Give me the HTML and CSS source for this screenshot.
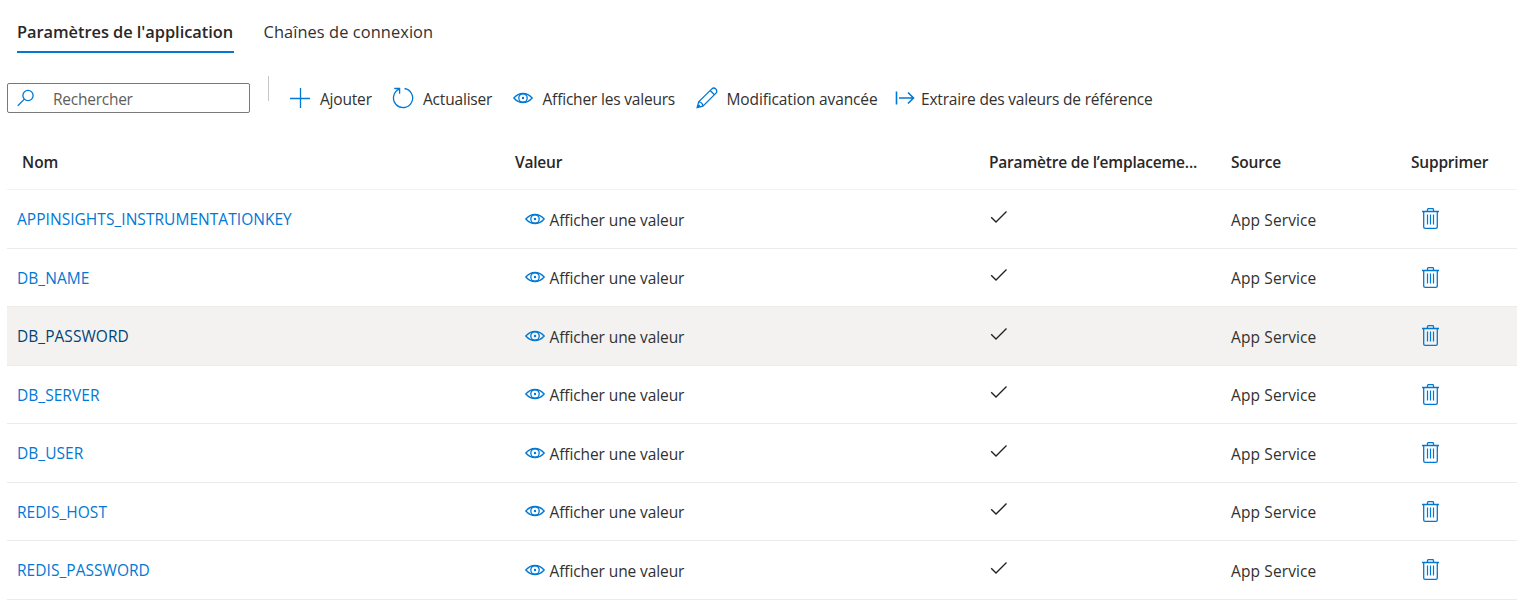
FILE: index.html
```html
<!DOCTYPE html>
<html lang="fr">
<head>
<meta charset="utf-8">
<title>Paramètres de l'application</title>
<link rel="stylesheet" href="styles.css">
</head>
<body>
<svg class="defs" width="0" height="0" aria-hidden="true">
  <symbol id="eye" viewBox="0 0 20 12"><path d="M.8 6C3.400 3 6.400 1.500 10 1.500S16.600 3 19.200 6C16.600 9 13.600 10.500 10 10.500S3.400 9 .8 6z"/><circle cx="10" cy="6" r="4.200"/><circle class="dot" cx="10" cy="6" r="1.200"/></symbol>
  <symbol id="check" viewBox="0 0 18 14"><path d="M1.200 7.300l4.800 4.800L16.500 1.600"/></symbol>
  <symbol id="trash" viewBox="0 0 17 21"><path d="M0 3.500h17M5.500 3.500V1.500q0-.8.8-.8h4.400q.8 0 .8.800v2M1.700 4v14.900q0 1.400 1.400 1.400h10.800q1.400 0 1.400-1.400V4"/><path class="thin" d="M5.500 6.500v10M8.500 6.500v10M11.500 6.500v10"/></symbol>
</svg>
<nav class="tabs">
  <a class="tab active">Paramètres de l'application</a>
  <a class="tab">Chaînes de connexion</a>
</nav>
<div class="toolbar">
  <div class="search">
    <svg class="icon" width="18" height="18" viewBox="0 0 18 18"><circle cx="11" cy="6.500" r="5.100"/><path d="M7.400 10.100L.8 16.700"/></svg>
    <span>Rechercher</span>
  </div>
  <i class="divider"></i>
  <div class="command c-add"><svg class="icon" width="20" height="20" viewBox="0 0 20 20"><path d="M10.500 0v20M0 10.500h20"/></svg><span>Ajouter</span></div>
  <div class="command c-refresh"><svg class="icon" width="22" height="22" viewBox="0 0 22 22"><path d="M12.500 1.500A9.600 9.600 0 1 1 7.200 2.200M2.300 1.500H7.600V6.800"/></svg><span>Actualiser</span></div>
  <div class="command c-show"><svg class="icon" width="20" height="12"><use href="#eye"/></svg><span>Afficher les valeurs</span></div>
  <div class="command c-edit"><svg class="icon" width="22" height="22" viewBox="0 0 22 22"><path d="M1.200 20.500l1.500-5.600L15.800 1.900c2.700-2.500 6.500 1.400 4.200 4.200L6.900 19.100zM2.700 14.900c2.200.2 3.900 1.900 4.200 4.200M14.200 3.500l4.200 4.200M1.200 20.500l2.500-2.500"/></svg><span>Modification avancée</span></div>
  <div class="command c-pull"><svg class="icon bold" width="20" height="14" viewBox="0 0 20 14"><path d="M1.500 .5v13M4 7h14.500M13 1.500L18.500 7L13 12.500"/></svg><span>Extraire des valeurs de référence</span></div>
</div>
<div class="grid">
  <div class="row head"><b class="h-name">Nom</b><b>Valeur</b><b class="h-slot">Paramètre de l’emplaceme...</b><b>Source</b><b>Supprimer</b></div>
  <div class="row"><a>APPINSIGHTS_INSTRUMENTATIONKEY</a><div class="value"><svg class="icon" width="20" height="12"><use href="#eye"/></svg><span>Afficher une valeur</span></div><svg class="icon check" width="18" height="14"><use href="#check"/></svg><span class="source">App Service</span><svg class="icon trash" width="17" height="21"><use href="#trash"/></svg></div>
  <div class="row"><a>DB_NAME</a><div class="value"><svg class="icon" width="20" height="12"><use href="#eye"/></svg><span>Afficher une valeur</span></div><svg class="icon check" width="18" height="14"><use href="#check"/></svg><span class="source">App Service</span><svg class="icon trash" width="17" height="21"><use href="#trash"/></svg></div>
  <div class="row hovered"><a>DB_PASSWORD</a><div class="value"><svg class="icon" width="20" height="12"><use href="#eye"/></svg><span>Afficher une valeur</span></div><svg class="icon check" width="18" height="14"><use href="#check"/></svg><span class="source">App Service</span><svg class="icon trash" width="17" height="21"><use href="#trash"/></svg></div>
  <div class="row"><a>DB_SERVER</a><div class="value"><svg class="icon" width="20" height="12"><use href="#eye"/></svg><span>Afficher une valeur</span></div><svg class="icon check" width="18" height="14"><use href="#check"/></svg><span class="source">App Service</span><svg class="icon trash" width="17" height="21"><use href="#trash"/></svg></div>
  <div class="row"><a>DB_USER</a><div class="value"><svg class="icon" width="20" height="12"><use href="#eye"/></svg><span>Afficher une valeur</span></div><svg class="icon check" width="18" height="14"><use href="#check"/></svg><span class="source">App Service</span><svg class="icon trash" width="17" height="21"><use href="#trash"/></svg></div>
  <div class="row"><a>REDIS_HOST</a><div class="value"><svg class="icon" width="20" height="12"><use href="#eye"/></svg><span>Afficher une valeur</span></div><svg class="icon check" width="18" height="14"><use href="#check"/></svg><span class="source">App Service</span><svg class="icon trash" width="17" height="21"><use href="#trash"/></svg></div>
  <div class="row"><a>REDIS_PASSWORD</a><div class="value"><svg class="icon" width="20" height="12"><use href="#eye"/></svg><span>Afficher une valeur</span></div><svg class="icon check" width="18" height="14"><use href="#check"/></svg><span class="source">App Service</span><svg class="icon trash" width="17" height="21"><use href="#trash"/></svg></div>
</div>
</body>
</html>
```

FILE: styles.css
```css
* { box-sizing: border-box; }
body {
  margin: 0;
  height: 600px;
  overflow: hidden;
  background: #fff;
  color: #323130;
  font: 15.5px/20px "Open Sans", "Noto Sans", sans-serif;
  white-space: nowrap;
}
.defs { display: block; height: 0; }
.icon { fill: none; stroke: #0078d4; stroke-width: 1.3; flex: none; }
.icon.bold { stroke-width: 1.6; }
.dot { fill: #0078d4; stroke: none; }
.thin { stroke-width: 1.2; }

.tabs { display: flex; gap: 29.500px; height: 53px; padding: 12px 0 0 17px; font-size: 16.400px; letter-spacing: .08px; }
.tab { height: 41px; padding-top: 10px; }
.tab.active { width: 217px; font-weight: 600; letter-spacing: -.04px; color: #292827; border-bottom: 2px solid #0078d4; }

.toolbar { display: flex; align-items: center; height: 90px; padding-left: 7px; }
.search { display: flex; align-items: center; gap: 18px; width: 243px; height: 30px; padding-left: 9px; border: 1px solid #7a7978; border-radius: 2px; color: #605e5c; letter-spacing: -.25px; }
.search span, .command span { padding-top: 1px; }
.divider { width: 1px; height: 25px; margin: 0 21px 19px 18px; background: #c8c6c4; }
.command { display: flex; align-items: center; flex: none; letter-spacing: -.19px; }
.c-add { width: 102px; gap: 10px; }
.c-refresh { width: 121px; gap: 9px; }
.c-show { width: 183px; gap: 9.500px; }
.c-edit { width: 199px; gap: 8.500px; letter-spacing: -.12px; }
.c-pull { gap: 6px; }

.grid { margin-left: 7px; }
.row { display: grid; grid-template-columns: 508px 474px 242px 180px 106px; align-items: center; height: 58.5px; border-bottom: 1px solid #edebe9; }
.row.head { height: 47px; padding-bottom: 9px; border-color: #f3f2f1; }
.row b { font-weight: 600; letter-spacing: -.2px; color: #292827; }
.row .h-name { padding-left: 15px; letter-spacing: 0; }
.row a { padding: .5px 0 0 10px; color: #0078d4; letter-spacing: .04px; }
.value { display: flex; align-items: center; gap: 5px; padding-left: 9.500px; letter-spacing: -.1px; }
.value span, .source { padding-top: 2px; }
.source { letter-spacing: .12px; }
.check { stroke: #222; margin: 0 0 4px 1px; stroke-width: 1.4; }
.trash { margin-left: 11px; }
.hovered { background: #f3f2f1; }
.row.hovered a { color: #004578; }
```
